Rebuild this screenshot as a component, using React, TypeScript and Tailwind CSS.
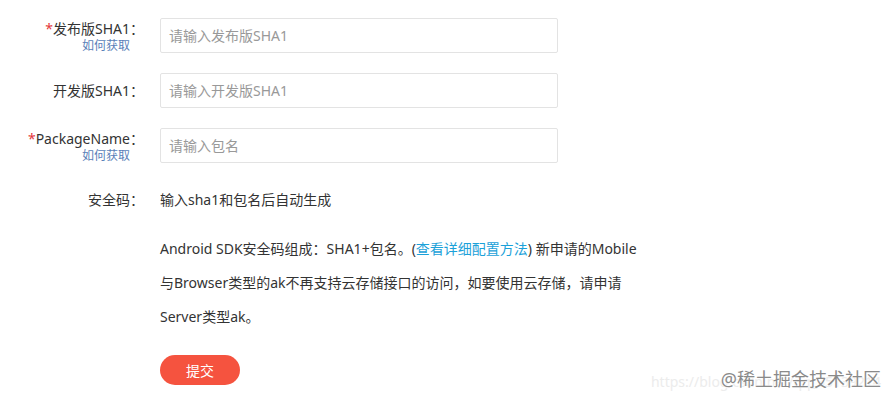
const font = { fontFamily: '"Noto Sans", "Noto Sans CJK SC", sans-serif' };

function Label({ text, required, help }: { text: string; required?: boolean; help?: boolean }) {
  return (
    <div className="w-[160px] shrink-0 pr-[16px] text-right">
      <div className="text-[14px] leading-[20px] text-[#333]">
        {required && <span className="text-[#e4393c]">*</span>}
        {text}
      </div>
      {help && (
        <div className="pr-[14px] text-[12px] leading-[14px] text-[#5b7fb8]">如何获取</div>
      )}
    </div>
  );
}

function Field({
  label,
  placeholder,
  required,
  help,
}: {
  label: string;
  placeholder: string;
  required?: boolean;
  help?: boolean;
}) {
  return (
    <div className={`flex h-[35px] ${help ? 'items-start' : 'items-center'}`}>
      <div className={help ? 'pt-[1px]' : ''}>
        <Label text={label} required={required} help={help} />
      </div>
      <div className="flex h-[35px] w-[398px] items-center rounded-[2px] border border-[#e3e3e3] bg-white px-[8px] text-[14px] text-[#999]">
        {placeholder}
      </div>
    </div>
  );
}

export default function App() {
  return (
    <div className="relative h-[403px] w-[895px] overflow-hidden bg-white" style={font}>
      <div className="flex flex-col gap-[20px] pt-[18px]">
        <Field label="发布版SHA1：" placeholder="请输入发布版SHA1" required help />
        <Field label="开发版SHA1：" placeholder="请输入开发版SHA1" />
        <Field label="PackageName：" placeholder="请输入包名" required help />
      </div>

      <div className="mt-[27px] flex items-center">
        <Label text="安全码：" />
        <div className="text-[14px] leading-[20px] text-[#333]">输入sha1和包名后自动生成</div>
      </div>

      <div className="ml-[160px] mt-[22px] w-[540px] text-[14px] leading-[34px] text-[#333]">
        <div>
          Android SDK安全码组成：SHA1+包名。(<span className="text-[#1ba1d9]">查看详细配置方法</span>) 新申请的Mobile
        </div>
        <div>与Browser类型的ak不再支持云存储接口的访问，如要使用云存储，请申请</div>
        <div>Server类型ak。</div>
      </div>

      <div className="ml-[160px] mt-[21px]">
        <button
          type="button"
          className="flex h-[30px] w-[80px] items-center justify-center rounded-full bg-[#f5533f] text-[14px] text-white"
        >
          提交
        </button>
      </div>

      <div className="pointer-events-none absolute right-[14px] top-[367px] text-[18px] leading-[24px] text-[#ececec]">
        <span className="absolute right-[0px] top-[3px] whitespace-nowrap text-[14px]">https://blog.csdn.net/qq_35139214</span>
        <span
          className="relative whitespace-nowrap text-[#8a8a8a]"
          style={{ textShadow: '0 0 2px #fff, 0 0 2px #fff' }}
        >
          @稀土掘金技术社区
        </span>
      </div>
    </div>
  );
}
